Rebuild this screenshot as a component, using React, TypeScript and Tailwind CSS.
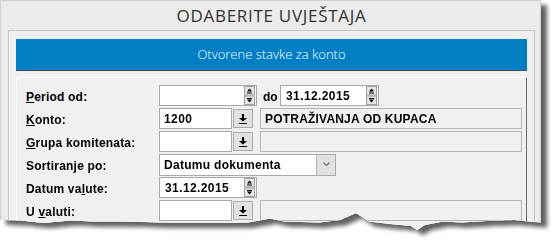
import React from "react";

const TEAR: [number, number][] = [
  [543, 223], [514, 220], [496, 220.5], [461, 222.5], [443, 221.5], [425, 225], [417, 230],
  [411, 226], [390, 224], [369, 221.5], [356, 213], [340, 220], [319, 222.5], [284, 221.5],
  [270, 218.5], [248, 222.5], [213, 223], [160, 222.5], [124, 221.5], [92, 221.5], [71, 220.5],
  [43, 223], [21, 220.5], [0, 220],
];

const clip = `polygon(0px 0px, 545px 0px, ${TEAR.map(([x, y]) => `${x}px ${y}px`).join(", ")})`;

const Spinner = () => (
  <svg width="11" height="19" viewBox="0 0 11 19" className="block shrink-0">
    <rect x="0.5" y="0.5" width="10" height="8.5" fill="#e6e6e6" stroke="#a0a0a0" />
    <rect x="0.5" y="10" width="10" height="8.5" fill="#e6e6e6" stroke="#a0a0a0" />
    <path d="M5.5 2.5 L8 5.5 L3 5.5 Z" fill="#000" />
    <rect x="3" y="6.5" width="5" height="1" fill="#000" />
    <rect x="3" y="12" width="5" height="1" fill="#000" />
    <path d="M3 13.5 L8 13.5 L5.5 16.5 Z" fill="#000" />
  </svg>
);

const PickIcon = () => (
  <svg width="8" height="10" viewBox="0 0 8 10" className="block">
    <path d="M3 0h2v4h3L4 7.5 0 4h3z" fill="#000" />
    <rect x="0" y="9" width="8" height="1" fill="#000" />
  </svg>
);

const Label = ({ children }: { children: React.ReactNode }) => (
  <div className="w-[133px] shrink-0 pt-[2px] text-[12px] font-bold text-black leading-none tracking-[0.2px]">{children}</div>
);

const DateInput = ({ value, w }: { value?: string; w: string }) => (
  <div className={`${w} h-[21px] shrink-0 bg-white border border-[#a9a9a9] flex items-center justify-between pl-[5px] pr-[1px]`}>
    <span className="text-[12px] font-bold text-black leading-none tracking-[0.4px]">{value}</span>
    <Spinner />
  </div>
);

const PickInput = ({ value }: { value?: string }) => (
  <>
    <div className="w-[73px] h-[21px] shrink-0 bg-white border border-[#a9a9a9] flex items-center pl-[4px] text-[12px] font-bold text-black leading-none tracking-[0.4px]">
      {value}
    </div>
    <div className="ml-[1px] w-[20px] h-[19px] shrink-0 bg-[#e1e1e1] border border-[#adadad] flex items-center justify-center">
      <PickIcon />
    </div>
  </>
);

const ReadOnly = ({ value }: { value?: string }) => (
  <div className="ml-[7px] w-[262px] h-[21px] shrink-0 bg-[#f0f0f0] border border-[#b4b4b4] flex items-center pl-[4px] text-[12px] font-bold text-black leading-none tracking-[0.2px]">
    {value}
  </div>
);

export default function App() {
  return (
    <div className="w-[556px] h-[245px] bg-white overflow-hidden" style={{ fontFamily: '"Liberation Sans", Arial, sans-serif' }}>
      <div className="[filter:drop-shadow(6px_5px_2px_rgba(0,0,0,0.62))]">
        <div className="w-[541px] h-[260px] bg-[#ebebeb] border border-[#cfcfcf] pl-[7px] pr-[5px]" style={{ clipPath: clip }}>
          <div
            className="h-[29px] flex items-center justify-center text-[17px] text-[#333] tracking-[0.7px]"
            style={{ fontFamily: '"Open Sans", "Liberation Sans", sans-serif' }}
          >
            ODABERITE UVJEŠTAJA
          </div>
          <div className="w-[527px] h-[240px] bg-[#f0f0f0] border border-[#c6c6c6] px-[7px] pt-[8px]">
            <div
              className="h-[32px] bg-[#007fc5] border-b border-[#4a4a4a] flex items-center justify-center text-white text-[13px] font-light"
              style={{ fontFamily: '"Open Sans", "Liberation Sans", sans-serif' }}
            >
              Otvorene stavke za konto
            </div>
            <div className="mt-[6px] h-[200px] bg-[#f0f0f0] border-t border-l border-t-white border-l-white border-r border-r-[#6b6b6b] pl-[9px] pt-[7px] flex flex-col gap-[2px]">
              <div className="h-[21px] flex items-center">
                <Label>
                  <u>P</u>eriod od:
                </Label>
                <DateInput w="w-[98px]" />
                <div className="ml-[6px] w-[17px] shrink-0 text-[12px] font-bold leading-none pt-[2px]">do</div>
                <DateInput w="w-[99px]" value="31.12.2015" />
              </div>
              <div className="h-[21px] flex items-center">
                <Label>
                  <u>K</u>onto:
                </Label>
                <PickInput value="1200" />
                <ReadOnly value="POTRAŽIVANJA OD KUPACA" />
              </div>
              <div className="h-[21px] flex items-center">
                <Label>
                  <u>G</u>rupa komitenata:
                </Label>
                <PickInput />
                <ReadOnly />
              </div>
              <div className="h-[21px] flex items-center">
                <Label>Sortiranje po:</Label>
                <div className="w-[177px] h-[22px] shrink-0 bg-white border border-[#a9a9a9] flex items-center justify-between pl-[4px]">
                  <span className="text-[12px] font-bold text-black leading-none tracking-[0.3px]">Datumu dokumenta</span>
                  <div className="w-[19px] h-[20px] bg-[#e1e1e1] border-l border-[#b0b0b0] flex items-center justify-center">
                    <svg width="7" height="5" viewBox="0 0 7 5" className="block">
                      <path d="M0.5 0.5 L3.5 3.5 L6.5 0.5" fill="none" stroke="#707070" strokeWidth="1.2" />
                    </svg>
                  </div>
                </div>
              </div>
              <div className="h-[21px] flex items-center">
                <Label>
                  Datum va<u>l</u>ute:
                </Label>
                <DateInput w="w-[98px]" value="31.12.2015" />
              </div>
              <div className="h-[21px] flex items-center">
                <Label>
                  U <u>v</u>aluti:
                </Label>
                <PickInput />
                <ReadOnly />
              </div>
              <div className="h-[21px] flex items-start">
                <div className="w-[133px] shrink-0" />
                <div className="ml-[1px] w-[48px] h-[18px] bg-[#e5f1fb] border-t-2 border-[#2f86d8]" />
              </div>
            </div>
          </div>
        </div>
      </div>
    </div>
  );
}
